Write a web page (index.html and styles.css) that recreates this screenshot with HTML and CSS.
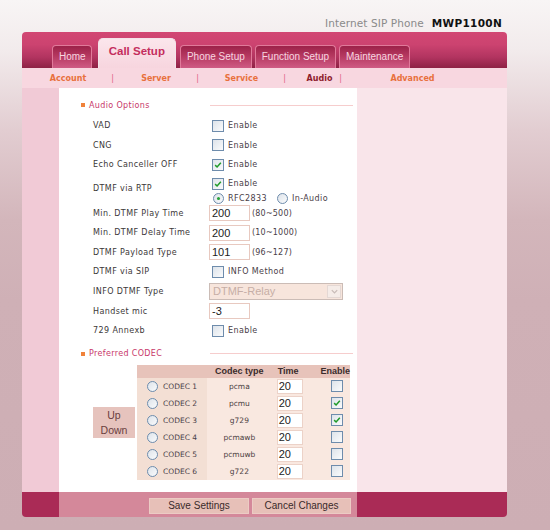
FILE: index.html
```html
<!DOCTYPE html>
<html>
<head>
<meta charset="utf-8">
<link rel="stylesheet" href="styles.css">
</head>
<body>
<div class="page">
  <div class="brand"><span class="brand-sub">Internet SIP Phone</span><span class="brand-model">MWP1100N</span></div>
  <div class="frame">
    <div class="tabs">
      <div class="tab t-home">Home</div>
      <div class="tab active">Call Setup</div>
      <div class="tab">Phone Setup</div>
      <div class="tab">Function Setup</div>
      <div class="tab">Maintenance</div>
    </div>
    <div class="subnav">
      <span>Account</span><span class="sep">|</span><span>Server</span><span class="sep">|</span><span>Service</span><span class="sep">|</span><span class="cur">Audio</span><span class="sep">|</span><span>Advanced</span>
    </div>
    <div class="body">
      <div class="side-l"></div>
      <div class="main">
        <div class="sect">
          <div class="sect-title"><i class="bullet"></i>Audio Options</div>
          <div class="sect-line"></div>
        </div>
        <div class="row"><div class="lbl">VAD</div><div class="ctl"><span class="cb"></span><span class="txt">Enable</span></div></div>
        <div class="row"><div class="lbl">CNG</div><div class="ctl"><span class="cb"></span><span class="txt">Enable</span></div></div>
        <div class="row"><div class="lbl">Echo Canceller OFF</div><div class="ctl"><span class="cb"><svg viewBox="0 0 12 12"><path d="M2.6 6.2 L4.9 8.4 L9.4 3.4"/></svg></span><span class="txt">Enable</span></div></div>
        <div class="row row-rtp">
          <div class="lbl">DTMF via RTP</div>
          <div class="ctl-stack">
            <div class="sub"><span class="cb"><svg viewBox="0 0 12 12"><path d="M2.6 6.2 L4.9 8.4 L9.4 3.4"/></svg></span><span class="txt">Enable</span></div>
            <div class="sub"><span class="rb on"></span><span class="txt">RFC2833</span><span class="rb gap"></span><span class="txt">In-Audio</span></div>
          </div>
        </div>
        <div class="row"><div class="lbl">Min. DTMF Play Time</div><div class="ctl"><span class="inp">200</span><span class="hint">(80~500)</span></div></div>
        <div class="row"><div class="lbl">Min. DTMF Delay Time</div><div class="ctl"><span class="inp">200</span><span class="hint">(10~1000)</span></div></div>
        <div class="row"><div class="lbl">DTMF Payload Type</div><div class="ctl"><span class="inp">101</span><span class="hint">(96~127)</span></div></div>
        <div class="row"><div class="lbl">DTMF via SIP</div><div class="ctl"><span class="cb"></span><span class="txt">INFO Method</span></div></div>
        <div class="row"><div class="lbl">INFO DTMF Type</div><div class="ctl"><span class="sel"><span class="sel-val">DTMF-Relay</span><span class="sel-btn"><svg viewBox="0 0 10 10"><path d="M2 3.5 L5 6.5 L8 3.5"/></svg></span></span></div></div>
        <div class="row"><div class="lbl">Handset mic</div><div class="ctl"><span class="inp">-3</span></div></div>
        <div class="row"><div class="lbl">729 Annexb</div><div class="ctl"><span class="cb"></span><span class="txt">Enable</span></div></div>

        <div class="sect sect2">
          <div class="sect-title"><i class="bullet"></i>Preferred CODEC</div>
          <div class="sect-line"></div>
        </div>
        <div class="codec">
          <div class="updown">Up<br>Down</div>
          <table class="ctab">
            <thead>
              <tr><th class="c1"></th><th class="c2">Codec type</th><th class="c3">Time</th><th class="c4">Enable</th></tr>
            </thead>
            <tbody>
              <tr><td class="c1"><span class="rb"></span><span class="cname">CODEC 1</span></td><td class="c2">pcma</td><td class="c3"><span class="tinp">20</span></td><td class="c4"><span class="cb"></span></td></tr>
              <tr><td class="c1"><span class="rb"></span><span class="cname">CODEC 2</span></td><td class="c2">pcmu</td><td class="c3"><span class="tinp">20</span></td><td class="c4"><span class="cb"><svg viewBox="0 0 12 12"><path d="M2.6 6.2 L4.9 8.4 L9.4 3.4"/></svg></span></td></tr>
              <tr><td class="c1"><span class="rb"></span><span class="cname">CODEC 3</span></td><td class="c2">g729</td><td class="c3"><span class="tinp">20</span></td><td class="c4"><span class="cb"><svg viewBox="0 0 12 12"><path d="M2.6 6.2 L4.9 8.4 L9.4 3.4"/></svg></span></td></tr>
              <tr><td class="c1"><span class="rb"></span><span class="cname">CODEC 4</span></td><td class="c2">pcmawb</td><td class="c3"><span class="tinp">20</span></td><td class="c4"><span class="cb"></span></td></tr>
              <tr><td class="c1"><span class="rb"></span><span class="cname">CODEC 5</span></td><td class="c2">pcmuwb</td><td class="c3"><span class="tinp">20</span></td><td class="c4"><span class="cb"></span></td></tr>
              <tr><td class="c1"><span class="rb"></span><span class="cname">CODEC 6</span></td><td class="c2">g722</td><td class="c3"><span class="tinp">20</span></td><td class="c4"><span class="cb"></span></td></tr>
            </tbody>
          </table>
        </div>
      </div>
      <div class="side-r"></div>
    </div>
    <div class="footer">
      <div class="f-l"></div>
      <div class="f-c"><span class="btn btn-save">Save Settings</span><span class="btn btn-cancel">Cancel Changes</span></div>
      <div class="f-r"></div>
    </div>
  </div>
</div>
</body>
</html>
```

FILE: styles.css
```css
html, body {
  margin: 0;
  padding: 0;
}
body {
  width: 550px;
  height: 530px;
  overflow: hidden;
  background: linear-gradient(180deg, #f8f5f5 0px, #f2ebec 50px, #e2cdd1 130px, #d3b6bb 220px, #cfb0b6 300px, #cdaeb4 530px);
  font-family: "DejaVu Sans", Verdana, sans-serif;
}
.page {
  margin-left: 22px;
  width: 485px;
}
.brand {
  height: 32px;
  display: flex;
  justify-content: flex-end;
  align-items: center;
  padding-top: 14px;
  box-sizing: border-box;
  padding-right: 5px;
  gap: 8px;
  white-space: nowrap;
}
.brand-sub {
  font-size: 10.5px;
  color: #8a8a8a;
  letter-spacing: 0.1px;
}
.brand-model {
  font-size: 10.5px;
  font-weight: bold;
  color: #111;
  letter-spacing: 0.3px;
}
.frame {
  border-radius: 4px;
  overflow: hidden;
}
.tabs {
  height: 36px;
  background: linear-gradient(180deg, #d24773 0%, #cc4370 35%, #b23460 70%, #8e2245 100%);
  display: flex;
  align-items: flex-end;
  padding-left: 30px;
  box-sizing: border-box;
}
.tab {
  height: 23px;
  box-sizing: border-box;
  padding: 5px 6px 0;
  margin-right: 3px;
  font-family: "Liberation Sans", Arial, sans-serif;
  font-size: 10px;
  color: #f7d6e0;
  white-space: nowrap;
  border: 1px solid #e07a9a;
  border-bottom: none;
  border-radius: 4px 4px 0 0;
  background: linear-gradient(180deg, #9c2249 0%, #b53860 45%, #cf5b84 100%);
}
.tab.t-home {
  margin-right: 6px;
  padding: 5px 5px 0 6px;
}
.tab.active {
  height: 30px;
  padding: 6px 10px 0;
  margin-right: 4px;
  font-size: 11.5px;
  font-weight: bold;
  color: #c42e5d;
  border: 1px solid #f3e4ea;
  border-bottom: none;
  border-radius: 5px 5px 0 0;
  background: linear-gradient(180deg, #fbe6ec 0%, #f7d5de 100%);
}
.subnav {
  height: 20px;
  background: #f8d7e0;
  display: grid;
  grid-template-columns: 36px 53px 34px 49px 39px 47px 23px 19px 125px;
  padding-left: 28px;
  align-items: center;
  justify-items: center;
  font-size: 8px;
  font-weight: bold;
  color: #e8713d;
  white-space: nowrap;
}
.subnav .sep {
  color: #e0648a;
  font-weight: normal;
}
.subnav .cur {
  color: #8e1d2d;
}
.body {
  display: flex;
  height: 404px;
}
.side-l {
  width: 37px;
  background: #f1cad6;
}
.side-r {
  width: 150px;
  background: #f9e5ea;
}
.main {
  width: 298px;
  background: #ffffff;
  padding-top: 8px;
  box-sizing: border-box;
  font-size: 8px;
  letter-spacing: 0.4px;
  color: #3c3838;
}
.sect {
  display: flex;
  align-items: center;
  height: 18px;
  margin-left: 22px;
  margin-bottom: 2px;
}
.sect2 {
  margin-top: 4.5px;
  margin-bottom: 2px;
}
.sect-title {
  width: 129px;
  display: flex;
  align-items: center;
  color: #c8386a;
  font-size: 8px;
  letter-spacing: 0.35px;
  white-space: nowrap;
}
.bullet {
  display: inline-block;
  width: 4px;
  height: 4px;
  background: #f0823a;
  margin-right: 4px;
}
.sect-line {
  width: 143px;
  border-top: 1px solid #f6cdcd;
}
.row {
  display: flex;
  align-items: center;
  height: 19.6px;
  padding-left: 34px;
}
.row-rtp {
  height: 28.5px;
  align-items: flex-start;
}
.row-rtp .lbl {
  padding-top: 9px;
}
.lbl {
  width: 116px;
  flex: none;
  white-space: nowrap;
}
.ctl {
  display: flex;
  align-items: center;
  white-space: nowrap;
}
.ctl-stack {
  padding-top: 1.5px;
}
.sub {
  height: 14.5px;
  display: flex;
  align-items: center;
  white-space: nowrap;
}
.cb {
  display: inline-block;
  width: 12px;
  height: 12px;
  box-sizing: border-box;
  border: 1px solid #6e8cac;
  background: linear-gradient(135deg, #dde3ea 0%, #fafbfc 100%);
  margin-left: 3px;
  position: relative;
}
.cb svg {
  display: block;
  width: 10px;
  height: 10px;
}
.cb svg path {
  fill: none;
  stroke: #1f9a28;
  stroke-width: 1.8;
}
.txt {
  margin-left: 4px;
  color: #4a4048;
}
.rb {
  display: inline-block;
  width: 11px;
  height: 11px;
  box-sizing: border-box;
  border: 1px solid #6e8cac;
  border-radius: 50%;
  background: linear-gradient(135deg, #dde3ea 0%, #fafbfc 100%);
  margin-left: 4px;
  position: relative;
}
.rb.on::after {
  content: "";
  position: absolute;
  left: 3px;
  top: 3px;
  width: 3px;
  height: 3px;
  border-radius: 50%;
  background: #26a03a;
}
.rb.gap {
  margin-left: 10px;
}
.inp {
  display: inline-block;
  width: 41px;
  height: 16px;
  box-sizing: border-box;
  border: 1px solid #e8c9c0;
  background: #fff;
  font-family: "Liberation Sans", Arial, sans-serif;
  font-size: 11px;
  letter-spacing: 0;
  color: #222;
  padding-left: 2px;
  line-height: 14px;
}
.hint {
  margin-left: 2px;
  color: #4a4048;
  letter-spacing: 0.2px;
}
.sel {
  display: flex;
  align-items: center;
  width: 134px;
  height: 17px;
  box-sizing: border-box;
  border: 1px solid #cbbcb6;
  background: #f7e5dc;
  font-family: "Liberation Sans", Arial, sans-serif;
  font-size: 11px;
  letter-spacing: 0;
  color: #c6aea6;
}
.sel-val {
  flex: 1;
  padding-left: 3px;
}
.sel-btn {
  width: 14px;
  height: 13px;
  margin-right: 1px;
  border: 1px solid #e4d8d4;
  box-sizing: border-box;
  background: #f5ece8;
  display: flex;
  align-items: center;
  justify-content: center;
}
.sel-btn svg {
  width: 9px;
  height: 9px;
}
.sel-btn svg path {
  fill: none;
  stroke: #c8bcb8;
  stroke-width: 1.4;
}
.codec {
  display: flex;
  align-items: center;
  padding-left: 34px;
  margin-top: 2px;
  letter-spacing: 0;
}
.updown {
  width: 42px;
  height: 31px;
  margin-right: 2px;
  background: #e6c3bd;
  font-family: "Liberation Sans", Arial, sans-serif;
  font-size: 10.5px;
  line-height: 15px;
  color: #6a3e3e;
  text-align: center;
  padding-top: 1px;
  box-sizing: border-box;
}
.ctab {
  border-collapse: collapse;
  width: 213px;
  font-family: "Liberation Sans", Arial, sans-serif;
}
.ctab th {
  height: 13px;
  padding: 0;
  background: #e7c3ba;
  font-size: 9px;
  font-weight: bold;
  color: #3a2c2c;
  line-height: 13px;
}
.ctab td {
  height: 17px;
  padding: 0;
  background: #f9e8e0;
}
.ctab .c1 {
  width: 71px;
  text-align: left;
}
.ctab td.c1 {
  background: #f3dfd4;
  white-space: nowrap;
}
.ctab .c2 {
  width: 68px;
  text-align: center;
}
.ctab td.c2 {
  font-family: "DejaVu Sans", Verdana, sans-serif;
  font-size: 7.5px;
  color: #4a4040;
}
.ctab .c3 {
  width: 42px;
  text-align: left;
}
.ctab th.c3 {
  padding-left: 6px;
  text-align: left;
}
.ctab .c4 {
  width: 32px;
}
.ctab th.c4 {
  text-align: right;
}
.ctab td.c4 {
  text-align: left;
  padding-left: 13px;
  box-sizing: border-box;
}
.ctab td.c4 .cb {
  margin-left: 0;
  vertical-align: middle;
}
.ctab td.c1 .rb {
  margin-left: 10px;
  vertical-align: middle;
}
.cname {
  margin-left: 5px;
  font-family: "DejaVu Sans", Verdana, sans-serif;
  font-size: 7.5px;
  color: #4a4048;
  vertical-align: middle;
}
.tinp {
  display: inline-block;
  margin-left: 5px;
  width: 26px;
  height: 15px;
  box-sizing: border-box;
  border: 1px solid #ecd2c8;
  background: #fff;
  font-size: 11px;
  line-height: 13px;
  color: #222;
  padding-left: 1px;
  vertical-align: middle;
}
.footer {
  display: flex;
  height: 25px;
}
.f-l {
  width: 37px;
  background: #aa2b56;
}
.f-r {
  width: 150px;
  background: #aa2b56;
}
.f-c {
  width: 298px;
  background: #d4889a;
  display: flex;
  align-items: flex-start;
  padding-top: 6px;
  padding-left: 90px;
  box-sizing: border-box;
  gap: 3px;
}
.btn {
  display: inline-block;
  height: 16px;
  box-sizing: border-box;
  background: #e7c0b8;
  border: 1px solid #eccbc4;
  font-family: "Liberation Sans", Arial, sans-serif;
  font-size: 10px;
  line-height: 14px;
  color: #3a2a2a;
  text-align: center;
}
.btn-save {
  width: 100px;
}
.btn-cancel {
  width: 99px;
}
```
